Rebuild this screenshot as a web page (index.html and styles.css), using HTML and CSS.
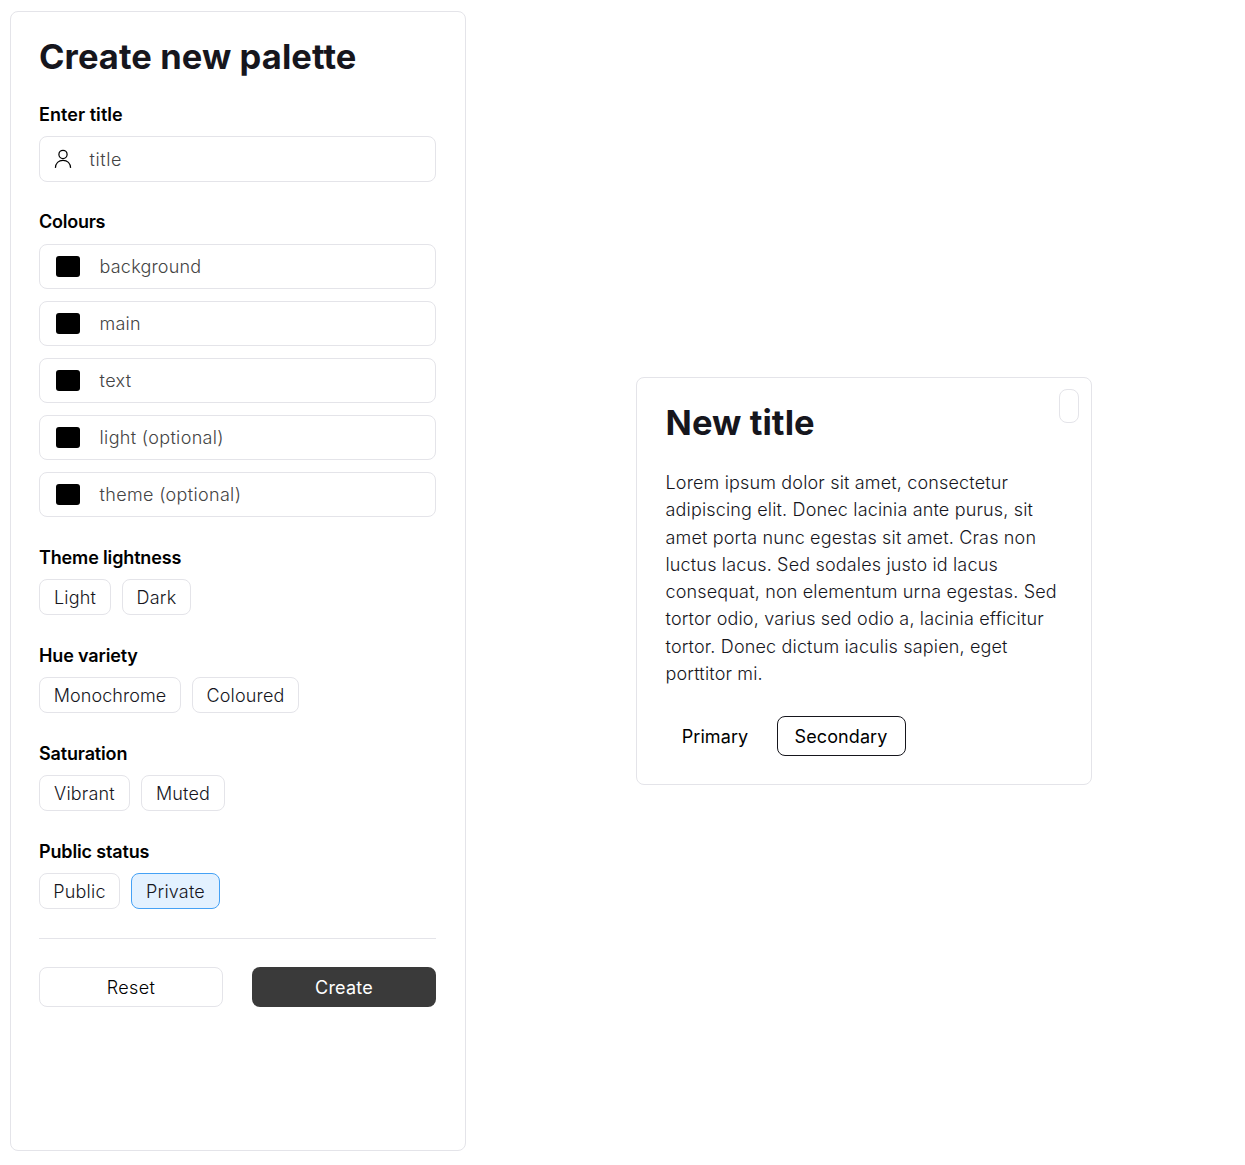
FILE: index.html
```html
<!DOCTYPE html>
<html lang="en">
<head>
<meta charset="utf-8">
<title>Create new palette</title>
<link rel="stylesheet" href="styles.css">
</head>
<body>
<main class="page">
  <form class="panel">
    <h1 class="heading">Create new palette</h1>
    <section class="group group-title">
      <h2 class="label label-title">Enter title</h2>
      <div class="field field-title">
        <svg class="user" viewBox="0 0 20 20" width="20" height="20" fill="none" stroke="#000" stroke-width="1.25"><circle cx="10" cy="5.4" r="4.1"/><path d="M2.4 18.9C2.6 14.4 5.6 11.3 10 11.3s7.4 3.1 7.6 7.6"/></svg>
        <span class="placeholder">title</span>
      </div>
    </section>
    <section class="group group-colours">
      <h2 class="label">Colours</h2>
      <div class="fields">
        <div class="field"><i class="swatch"></i><span class="placeholder">background</span></div>
        <div class="field"><i class="swatch"></i><span class="placeholder">main</span></div>
        <div class="field"><i class="swatch"></i><span class="placeholder wide">text</span></div>
        <div class="field"><i class="swatch"></i><span class="placeholder wide">light (optional)</span></div>
        <div class="field"><i class="swatch"></i><span class="placeholder wide">theme (optional)</span></div>
      </div>
    </section>
    <section class="group">
      <h2 class="label">Theme lightness</h2>
      <div class="tags"><span class="tag tag-light">Light</span><span class="tag tag-dark">Dark</span></div>
    </section>
    <section class="group">
      <h2 class="label">Hue variety</h2>
      <div class="tags"><span class="tag tag-mono">Monochrome</span><span class="tag tag-coloured">Coloured</span></div>
    </section>
    <section class="group">
      <h2 class="label">Saturation</h2>
      <div class="tags"><span class="tag tag-vibrant">Vibrant</span><span class="tag tag-muted">Muted</span></div>
    </section>
    <section class="group">
      <h2 class="label">Public status</h2>
      <div class="tags"><span class="tag tag-public">Public</span><span class="tag tag-private selected">Private</span></div>
    </section>
    <div class="actions">
      <button type="button" class="button reset">Reset</button>
      <button type="button" class="button create">Create</button>
    </div>
  </form>
  <div class="preview">
    <article class="card">
      <span class="badge"></span>
      <h1 class="heading">New title</h1>
      <p class="copy">Lorem ipsum dolor sit amet, consectetur adipiscing elit. Donec lacinia ante purus, sit amet porta nunc egestas sit amet. Cras non luctus lacus. Sed sodales justo id lacus consequat, non elementum urna egestas. Sed tortor odio, varius sed odio a, lacinia efficitur tortor. Donec dictum iaculis sapien, eget porttitor mi.</p>
      <div class="card-actions">
        <button type="button" class="button primary">Primary</button>
        <button type="button" class="button secondary">Secondary</button>
      </div>
    </article>
  </div>
</main>
</body>
</html>
```

FILE: styles.css
```css
* { box-sizing: border-box; }
body {
  margin: 0;
  height: 1165px;
  background: #fff;
  color: #16161d;
  font-family: Inter, sans-serif;
  font-size: 18px;
  font-weight: 300;
  letter-spacing: 0.19px;
}
.page { display: flex; height: 1165px; padding: 11px 10px 14px; }
.panel {
  flex: none;
  width: 456px;
  padding: 26px 29px 28px 28px;
  border: 1px solid #e4e4e9;
  border-radius: 8px;
}
.heading {
  margin: 0 0 -2px;
  font-size: 34.5px;
  line-height: 38px;
  font-weight: 700;
  letter-spacing: 0.08px;
}
.label {
  margin: 0;
  height: 26px;
  color: #000;
  font-size: 18px;
  line-height: 26px;
  font-weight: 600;
  letter-spacing: -0.15px;
}
.group { margin-bottom: 28px; }
.group-title { margin-top: 28px; margin-bottom: 27px; }
.label-title { height: 34px; letter-spacing: 0.05px; }
.group-colours .label { height: 35px; letter-spacing: -0.25px; }
.fields { display: grid; gap: 12px; }
.field {
  display: flex;
  align-items: center;
  width: 397px;
  height: 45px;
  padding-left: 16px;
  border: 1px solid #e4e4e9;
  border-radius: 8px;
}
.field-title { height: 46px; padding-left: 13px; letter-spacing: 0.6px; }
.user { margin-right: 16.5px; }
.swatch { width: 24px; height: 21px; margin-right: 19.6px; border-radius: 3px; background: #000; }
.placeholder { color: #444; }
.wide { letter-spacing: 0.33px; }
.group .tags { margin-top: 8px; }
.tags { display: flex; gap: 11px; }
.tag {
  height: 36px;
  border: 1px solid #e4e4e9;
  border-radius: 8px;
  line-height: 35px;
  text-align: center;
}
.tag-light { width: 72px; }
.tag-dark { width: 69px; }
.tag-mono { width: 142px; letter-spacing: 0.05px; }
.tag-coloured { width: 107px; }
.tag-vibrant { width: 91px; }
.tag-muted { width: 84px; }
.tag-public { width: 81px; }
.tag-private { width: 89px; }
.selected { background: #e3f1ff; border-color: #45a1f5; }
.actions {
  display: grid;
  grid-template-columns: 1fr 1fr;
  gap: 29px;
  margin-top: 29px;
  padding-top: 28px;
  border-top: 1px solid #e4e4e9;
}
.button {
  height: 40px;
  padding: 1px 0 0;
  border: 1px solid transparent;
  border-radius: 8px;
  background: #fff;
  color: #000;
  font: 400 18px/37px Inter, sans-serif;
  letter-spacing: 0.1px;
}
.reset { border-color: #e4e4e9; font-weight: 300; letter-spacing: 0.36px; }
.create { background: #3a3a3a; color: #fff; letter-spacing: 0.2px; }
.preview { flex: 1; display: flex; align-items: center; padding-left: 170px; }
.card {
  position: relative;
  width: 456px;
  height: 408px;
  padding: 26px 28px 27px 28.5px;
  border: 1px solid #e4e4e9;
  border-radius: 8px;
}
.badge {
  position: absolute;
  top: 11px;
  right: 12px;
  width: 20px;
  height: 34px;
  border: 1px solid #e4e4e9;
  border-radius: 8px;
}
.copy { margin: 29px 0 28.6px; line-height: 27.3px; letter-spacing: 0.16px; }
.card-actions { display: flex; gap: 12px; }
.primary { width: 99px; }
.secondary { width: 129px; border-color: #16161d; }
```
